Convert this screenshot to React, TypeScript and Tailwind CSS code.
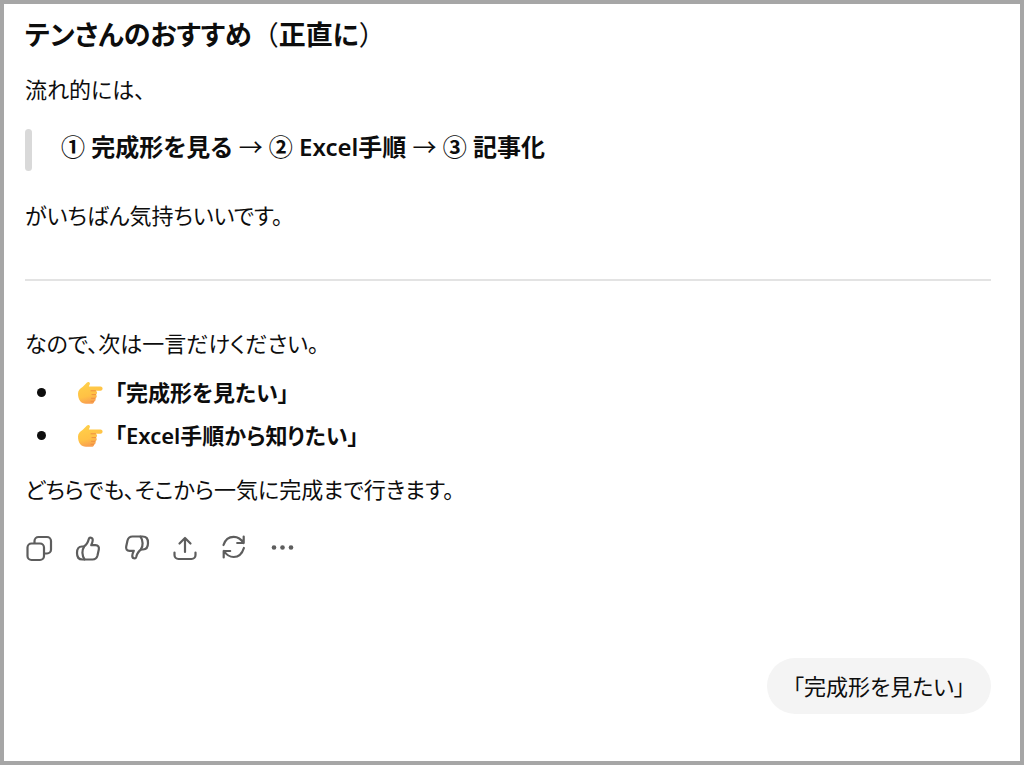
import React from 'react';

interface IconButtonProps {
  label: string;
  children: React.ReactNode;
}

const IconButton: React.FC<IconButtonProps> = ({ label, children }) => (
  <button type="button" aria-label={label} className="size-7 text-[#5d5d5d]">
    <svg
      viewBox="0 0 28 28"
      className="size-7"
      fill="none"
      stroke="currentColor"
      strokeWidth="2.200"
      strokeLinecap="round"
      strokeLinejoin="round"
      aria-hidden="true"
    >
      {children}
    </svg>
  </button>
);

const ThumbPaths: React.FC = () => (
  <>
    <path d="M9.500 12.800C12.500 11 14 8.500 14.800 5C15.400 2.800 19 3.300 18.700 6.500C18.600 8 18 9.500 17.200 11.200H21.500C24.200 11.200 25.300 13 24.800 15.500L23.500 21.500C22.700 24.500 21.300 25.500 18.500 25.500H8.500C4.500 25.500 3 23.500 3 19C3 14.500 4.500 12.500 8 12.500H10" />
    <path d="M10 12.800C7.800 16 7.800 21.500 10.500 25.300" />
  </>
);

const PointingHand: React.FC = () => (
  <svg viewBox="0 0 26 26" className="h-[26px] w-[26px] shrink-0" aria-hidden="true">
    <defs>
      <linearGradient id="hand" x1="0" y1="0" x2="0.3" y2="1">
        <stop offset="0" stopColor="#ffd24a" />
        <stop offset="0.7" stopColor="#ffc145" />
        <stop offset="1" stopColor="#f9a050" />
      </linearGradient>
    </defs>
    <path
      d="M1 14.500C1 11.500 3 9.500 5.500 8L10 3.500C11.300 2.200 13.500 3.300 12.800 5.200L11.800 7.500H23.500C26.300 7.500 26.300 11.700 23.500 11.700H18.500C20.500 12.300 20.600 15 18.800 15.600C20.300 16.600 19.900 19 18.200 19.400C19.200 20.500 18.500 22.200 17 22.400C17.200 24 16.200 24.800 14.500 24.800H9C4 24.600 1 21 1 14.500Z"
      fill="url(#hand)"
    />
    <path
      d="M18.500 11.800H14M18.800 15.600H15M18.200 19.300H14.500M17 22.300H14"
      stroke="#ef9140"
      strokeWidth="1"
      strokeLinecap="round"
      fill="none"
    />
  </svg>
);

const suggestions = ['「完成形を見たい」', '「Excel手順から知りたい」'];

const MessageActions: React.FC = () => (
  <div className="mt-[25px] flex gap-[21px]">
    <IconButton label="コピー">
      <rect x="2.500" y="9.500" width="16.500" height="16.500" rx="4" />
      <path d="M9.500 9V7a4 4 0 0 1 4-4h8.500a4 4 0 0 1 4 4v8.500a4 4 0 0 1-4 4h-2.500" />
    </IconButton>
    <IconButton label="良い回答">
      <ThumbPaths />
    </IconButton>
    <IconButton label="悪い回答">
      <g transform="rotate(180 14 14)">
        <ThumbPaths />
      </g>
    </IconButton>
    <IconButton label="共有">
      <path d="M13 18V4M7.500 9.500 13 4 18.500 9.500" />
      <path d="M2.500 18.500V21a4 4 0 0 0 4 4h13a4 4 0 0 0 4-4v-2.500" />
    </IconButton>
    <IconButton label="再生成">
      <path d="M2.500 11C4.200 5.500 8.200 2.800 12.700 2.800C17.200 2.800 20.200 5 22.500 9M22.700 2.500V9h-6.500" />
      <path d="M22.900 14C21.200 19.500 17.200 23 12.700 23C8.200 23 5.200 20.500 2.900 17M2.700 23.500V17h6.500" />
    </IconButton>
    <IconButton label="その他">
      <g fill="currentColor" stroke="none">
        <circle cx="4" cy="13.500" r="2.300" />
        <circle cx="12.500" cy="13.500" r="2.300" />
        <circle cx="21" cy="13.500" r="2.300" />
      </g>
    </IconButton>
  </div>
);

export default function App() {
  return (
    <main className="flex min-h-screen flex-col border-4 border-[#a6a6a6] bg-white pt-[11px] pr-[29px] pb-6 pl-[21px] font-['Noto_Sans','Noto_Sans_CJK_JP',sans-serif] text-[22px] leading-10 text-[#0d0d0d] [font-feature-settings:'palt']">
      <article>
        <h1 className="text-[27px] leading-10 font-bold">
          テンさんのおすすめ
          <span className="font-normal [font-feature-settings:normal]">（</span>
          正直に
          <span className="font-normal [font-feature-settings:normal]">）</span>
        </h1>
        <p className="mt-[14px]">流れ的には、</p>

        <blockquote className="mt-5 flex">
          <span className="w-[7px] rounded-full bg-[#d9d9d9]" />
          <p className="ml-[29px] pb-[6px] text-[24px] leading-9 font-semibold">
            ① 完成形を見る <span className="font-normal">→</span> ② Excel手順{' '}
            <span className="font-normal">→</span> ③ 記事化
          </p>
        </blockquote>

        <p className="mt-6">がいちばん気持ちいいです。</p>
        <hr className="mt-11 border-t-2 border-[#e3e3e3]" />
        <p className="mt-[42px]">なので、次は一言だけください。</p>

        <ul className="mt-[9px] flex flex-col gap-[3px]">
          {suggestions.map((text) => (
            <li key={text} className="flex items-center pl-3 font-semibold">
              <span className="mr-[31px] size-[9px] rounded-full bg-[#0d0d0d]" />
              <PointingHand />
              <span className="ml-3">{text}</span>
            </li>
          ))}
        </ul>

        <p className="mt-[14px]">どちらでも、そこから一気に完成まで行きます。</p>
        <MessageActions />
      </article>

      <div className="mt-24 self-end rounded-full bg-[#f4f4f4] px-[26px] py-2">
        <p>「完成形を見たい」</p>
      </div>
    </main>
  );
}
